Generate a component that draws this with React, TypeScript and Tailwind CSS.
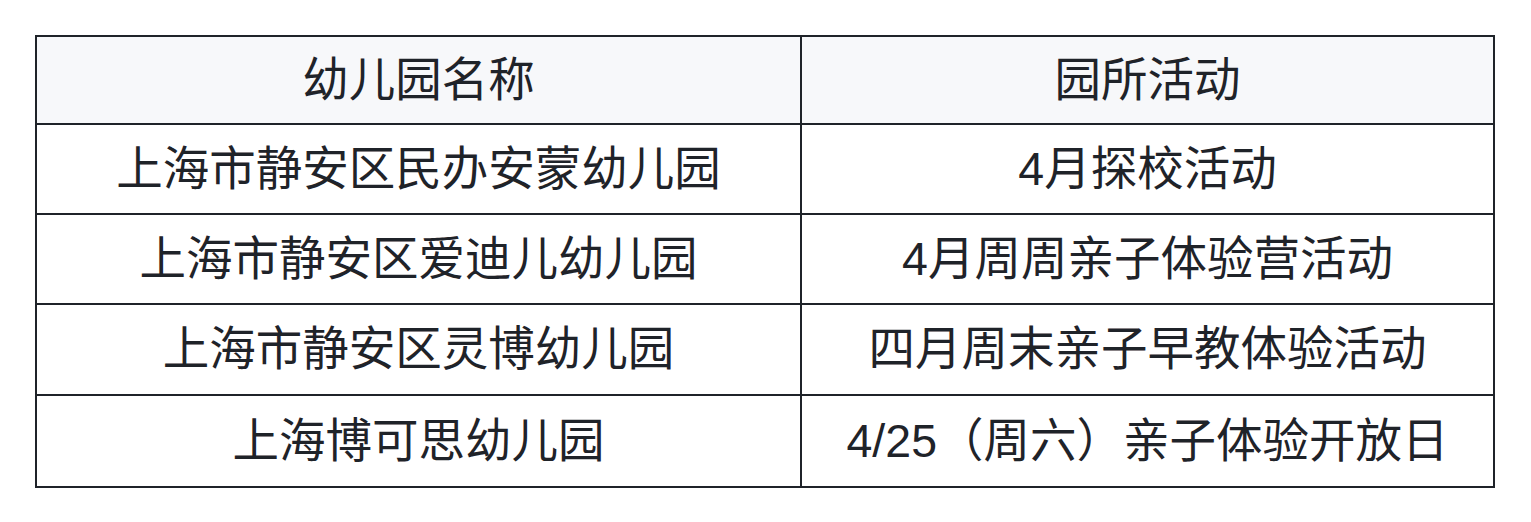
const rows = [
  { name: '上海市静安区民办安蒙幼儿园', activity: '4月探校活动', h: 'h-[90px]' },
  { name: '上海市静安区爱迪儿幼儿园', activity: '4月周周亲子体验营活动', h: 'h-[90px]' },
  { name: '上海市静安区灵博幼儿园', activity: '四月周末亲子早教体验活动', h: 'h-[91px]' },
  { name: '上海博可思幼儿园', activity: '4/25（周六）亲子体验开放日', h: 'h-[92px]' },
]

export default function App() {
  return (
    <div
      className="min-h-[522px] w-[1531px] bg-white pl-[35px] pt-[35px]"
      style={{ fontFamily: '"Liberation Sans", "Noto Sans CJK SC", sans-serif' }}
    >
      <table className="w-[1460px] table-fixed border-collapse border-2 border-[#1f2329] text-[46.5px] leading-none text-[#1f2329]">
        <colgroup>
          <col className="w-[765px]" />
          <col />
        </colgroup>
        <thead>
          <tr className="h-[88px] bg-[#f7f8fa]">
            <th className="border-2 border-[#1f2329] text-center font-normal">幼儿园名称</th>
            <th className="border-2 border-[#1f2329] text-center font-normal">园所活动</th>
          </tr>
        </thead>
        <tbody>
          {rows.map((row) => (
            <tr key={row.name} className={row.h}>
              <td className="border-2 border-[#1f2329] text-center">{row.name}</td>
              <td className="border-2 border-[#1f2329] text-center">{row.activity}</td>
            </tr>
          ))}
        </tbody>
      </table>
    </div>
  )
}
